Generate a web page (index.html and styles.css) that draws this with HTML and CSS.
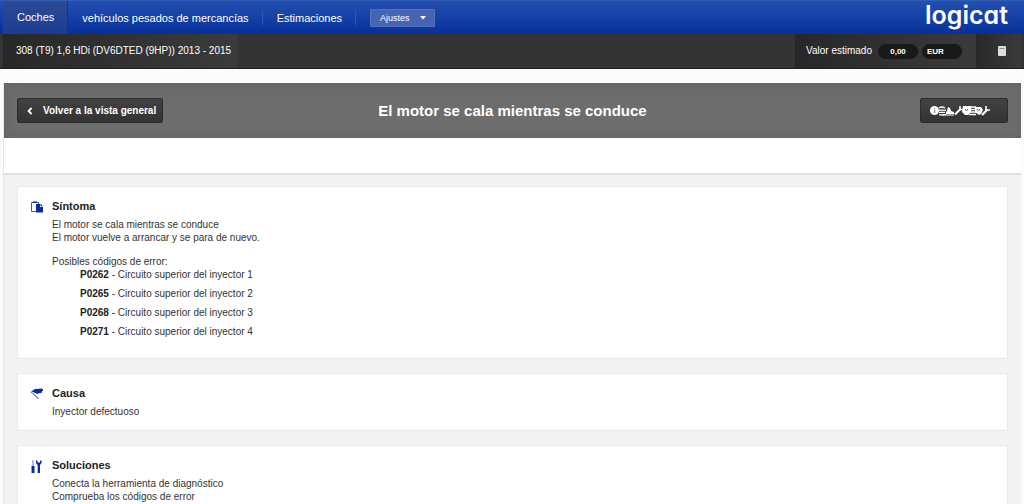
FILE: index.html
```html
<!DOCTYPE html>
<html lang="es">
<head>
    <meta charset="utf-8" />
    <meta name="viewport" content="width=device-width, initial-scale=1" />
    <title>El motor se cala mientras se conduce</title>
    <link rel="stylesheet" href="styles.css">
</head>
<body>
    <header class="topbar">
        <nav class="main-nav">
            <a href="#" class="active">Coches</a>
            <a href="#">vehículos pesados de mercancías</a>
            <a href="#">Estimaciones</a>
        </nav>
        <button type="button" class="settings-btn">Ajustes
            <svg width="6" height="4" viewBox="0 0 6 4"><path d="M0 0h6L3 3.5z" fill="#fff"/></svg>
        </button>
        <a href="#" class="logo">logicat</a>
    </header>

    <div class="vehicle-bar">
        <div class="vehicle">308 (T9) 1,6 HDi (DV6DTED (9HP)) 2013 - 2015</div>
        <div class="estimate">
            <span class="estimate-label">Valor estimado</span>
            <span class="pill amount">0,00</span>
            <span class="pill currency">EUR</span>
        </div>
        <button type="button" class="calc-btn" aria-label="Calculadora">
            <svg width="8" height="10" viewBox="0 0 8 10">
                <rect width="8" height="10" rx="1" fill="#ddd"/>
                <path d="M1.5 2.5h5" stroke="#888"/>
            </svg>
        </button>
    </div>

    <main class="page">
        <div class="title-bar">
            <button type="button" class="dark-btn back-btn">
                <svg width="6" height="8" viewBox="0 0 6 8"><path d="M4.6 1L1.6 4l3 3" fill="none" stroke="#fff" stroke-width="1.8"/></svg>
                Volver a la vista general
            </button>
            <h1>El motor se cala mientras se conduce</h1>
            <button type="button" class="dark-btn tools-btn" aria-label="Herramientas">
                <svg width="60" height="10" viewBox="0 0 60 10" fill="none" stroke="#fff">
                    <circle cx="4.5" cy="4.5" r="4.5" fill="#fff" stroke="none"/>
                    <path d="M4.7 4v3M4.7 2v1" stroke="#777"/>
                    <path d="M9 2q3-2 6 0M9 4.2h7M9 6.4h6M9 8.5q3 1 7 0" stroke-width="1.3"/>
                    <path d="M18 1l2 1 1 3 3 1v2h-8V6l1-1z" fill="#fff" stroke="none"/>
                    <path d="M16 9h8"/>
                    <path d="M25 8.5L30.5 3" stroke-width="2"/>
                    <path d="M30 0v3.5h3" stroke-width="1.5"/>
                    <path d="M33 0h8v6l-3 3h-3l-3-3z" fill="#fff" stroke="none"/>
                    <path d="M35 3l1.5 2L38 3" stroke="#666"/>
                    <path d="M40 1h6M40 3.5h6M40 6h6M39 8.5h7" stroke-width="1.5"/>
                    <path d="M45 1h6l2 3-2 4-2 1-4-3z" fill="#fff" stroke="none"/>
                    <path d="M47 3l1.5 2L50 3" stroke="#666"/>
                    <path d="M52 9l5-5" stroke-width="2.2"/>
                    <path d="M56 0v4h4" stroke-width="1.6"/>
                </svg>
            </button>
        </div>
        <div class="toolbar"></div>

        <div class="content">
            <section class="card">
                <svg class="card-icon" width="12" height="12" viewBox="0 0 12 12">
                    <path d="M.5 1.5h7v9h-7z" fill="#fff" stroke="#3f59b4"/>
                    <path d="M2 .5h4v1.500H2z" fill="#0b2a9c"/>
                    <path d="M5 3h4v3h3v5.500H5z" fill="#0b2a9c"/>
                    <path d="M9.500 2.500L12 5.300H9.500z" fill="#0b2a9c"/>
                </svg>
                <div class="card-body">
                    <h2>Síntoma</h2>
                    <p>El motor se cala mientras se conduce<br>
                    El motor vuelve a arrancar y se para de nuevo.</p>
                    <p class="codes-title">Posibles códigos de error:</p>
                    <ul class="codes">
                        <li><b>P0262</b> - Circuito superior del inyector 1</li>
                        <li><b>P0265</b> - Circuito superior del inyector 2</li>
                        <li><b>P0268</b> - Circuito superior del inyector 3</li>
                        <li><b>P0271</b> - Circuito superior del inyector 4</li>
                    </ul>
                </div>
            </section>

            <section class="card">
                <svg class="card-icon" width="12" height="12" viewBox="0 0 12 12">
                    <path d="M1.500 3Q4 0 7 1q2-1 5 0v1.500Q10.500 3 10.500 5 8 4.500 6.500 6L3 4.500z" fill="#0b2a9c"/>
                    <path d="M0 4.500L3 2M1 4.500l6.500 6.500" stroke="#0b2a9c" fill="none"/>
                </svg>
                <div class="card-body">
                    <h2>Causa</h2>
                    <p>Inyector defectuoso</p>
                </div>
            </section>

            <section class="card">
                <svg class="card-icon" width="12" height="14" viewBox="0 0 12 14">
                    <path d="M2 0v7" stroke="#5f76c4"/>
                    <path d="M.5 6h3v7h-3z" fill="#0b2a9c"/>
                    <path d="M5 0l1.500 1v1.500h2.500V1L10.500 0v3L9 5v8H6.700V5L5 3z" fill="#0b2a9c"/>
                </svg>
                <div class="card-body">
                    <h2>Soluciones</h2>
                    <p>Conecta la herramienta de diagnóstico<br>
                    Comprueba los códigos de error</p>
                </div>
            </section>
        </div>
    </main>
</body>
</html>
```
FILE: styles.css
```css
body {
    margin: 0;
    font-family: "Liberation Sans", Arial, sans-serif;
    font-size: 10px;
    line-height: 13px;
    color: #333;
    background: #fcfcfc;
}

button {
    font-family: inherit;
    cursor: pointer;
}

/* top navigation */
.topbar {
    display: flex;
    align-items: center;
    height: 34px;
    padding: 0 16px 0 3px;
    background: linear-gradient(#2450b0, #06309a);
    border-top: 1px solid #2f5cb5;
    box-sizing: border-box;
}

.main-nav {
    display: flex;
    align-self: stretch;
    align-items: center;
}

.main-nav a {
    padding: 0 13px 0 14px;
    line-height: 14px;
    font-size: 11px;
    color: #fff;
    text-decoration: none;
    border-right: 1px solid #3058b4;
}

.main-nav a.active {
    line-height: 33px;
    background: linear-gradient(#2d4a93, #1a3d96);
    border-color: #12358c;
}

.settings-btn {
    display: flex;
    align-items: center;
    justify-content: space-between;
    width: 65px;
    height: 18px;
    margin-left: 14px;
    padding: 0 8px 0 9px;
    font-size: 9px;
    color: #fff;
    background: #4565b4;
    border: 1px solid #5571b8;
    border-radius: 1px;
}

.logo {
    margin-left: auto;
    padding-bottom: 5px;
    font-family: Inter, sans-serif;
    font-feature-settings: "cv11";
    font-size: 25px;
    font-weight: 600;
    line-height: 28px;
    color: #fff;
    text-decoration: none;
}

/* selected vehicle */
.vehicle-bar {
    display: flex;
    height: 35px;
    padding: 0 3px;
    line-height: 34px;
    color: #fff;
    background: #343434;
    border-bottom: 1px solid #222;
    box-sizing: border-box;
}

.vehicle {
    padding: 0 6px 0 13px;
    background: linear-gradient(90deg, #282828, #3b3b3b);
}

.estimate {
    display: flex;
    align-items: center;
    gap: 4px;
    margin-left: auto;
    padding: 0 14px 0 11px;
    background: linear-gradient(90deg, #272727, #3a3a3a);
}

.estimate-label {
    margin-right: 2px;
}

.pill {
    width: 40px;
    height: 15px;
    line-height: 15px;
    font-size: 8px;
    font-weight: bold;
    background: #191919;
    border-radius: 8px;
    box-sizing: border-box;
}

.amount {
    text-align: center;
}

.currency {
    padding-left: 5px;
}

.calc-btn {
    width: 45px;
    padding: 0 0 0 6px;
    background: linear-gradient(90deg, #292929, #3a3a3a);
    border: 0;
}

/* page */
.page {
    margin: 14px 3px 0;
    background: #f3f3f3;
    border-left: 1px solid #e6e6e6;
    box-sizing: border-box;
}

.title-bar {
    display: grid;
    grid-template-columns: 1fr auto 1fr;
    align-items: center;
    height: 55px;
    padding: 0 13px;
    background: #6d6d6d;
    box-shadow: inset 0 0 12px #646464;
    box-sizing: border-box;
}

.title-bar h1 {
    margin: 0;
    font-size: 15px;
    line-height: 20px;
    color: #fff;
}

.dark-btn {
    display: flex;
    align-items: center;
    height: 25px;
    color: #fff;
    background: linear-gradient(#424242, #333);
    border: 1px solid #2c2c2c;
    border-radius: 2px;
}

.back-btn {
    justify-self: start;
    gap: 10px;
    padding: 0 6px 0 9px;
    font-size: 10px;
    font-weight: bold;
}

.tools-btn {
    justify-self: end;
    width: 88px;
    padding: 0 9px;
}

.toolbar {
    height: 35px;
    background: #fff;
    border-bottom: 2px solid #dedede;
}

.content {
    display: flex;
    flex-direction: column;
    gap: 14px;
    padding: 11px 13px 14px;
}

.card {
    display: flex;
    gap: 9px;
    padding: 12px 13px;
    background: #fff;
    border: 1px solid #e9e9e9;
}

.card-icon {
    flex: none;
    margin-top: 2px;
}

.card h2 {
    margin: 0 0 5px;
    font-size: 11px;
    line-height: 14px;
    color: #222;
}

.card p {
    margin: 0;
}

.card .codes-title {
    margin-top: 12px;
    line-height: 12px;
}

.codes {
    margin: 0;
    padding: 0 0 2px 28px;
    list-style: none;
}

.codes li {
    margin-bottom: 6px;
}

.codes b {
    color: #222;
}
```
